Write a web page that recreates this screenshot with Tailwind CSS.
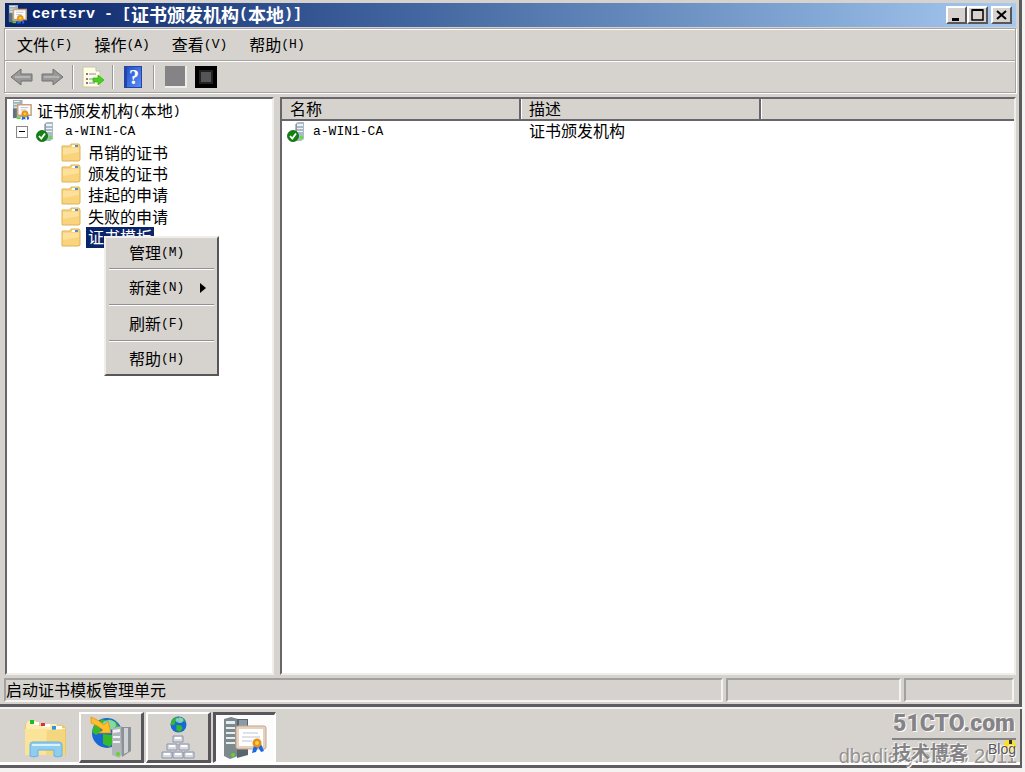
<!DOCTYPE html>
<html lang="zh-CN">
<head>
<meta charset="utf-8">
<meta name="viewport" content="width=device-width, initial-scale=1">
<title>certsrv - [证书颁发机构(本地)]</title>
<script src="https://cdn.jsdelivr.net/npm/@tailwindcss/browser@4"></script>
</head>
<body class="flex h-screen flex-col overflow-hidden bg-[#f4f3f1] pr-[3px] pb-1 font-['Liberation_Mono','Noto_Sans_CJK_SC',monospace] text-[13px] leading-5 text-black">

<svg class="hidden" aria-hidden="true">
  <symbol id="cert" viewBox="0 0 22 22">
    <path d="M1 0h10v18H1z" fill="#9fb0b8"/><path d="M2 1h6v1H2zm0 3h6v1H2zm0 3h6v1H2z" fill="#eef5f8"/><path d="M1 9h4v10H1z" fill="#64727b"/>
    <path d="M6 5h14v11H6z" fill="#fff" stroke="#c9a27c" stroke-width="1.6"/><path d="M9 8h8M9 10.500h6" stroke="#b8bcd8" stroke-width="1"/>
    <path d="M11 16l-1 5 3-1 1 1v-5zM15 16l1 5 2-1-1-4z" fill="#1769f5"/><path d="M5 18h4v2H5z" fill="#5fd32b"/>
    <circle cx="13.500" cy="14.500" r="3.600" fill="#e89410"/><circle cx="13.500" cy="14.500" r="1.500" fill="#ffc845"/>
  </symbol>
  <symbol id="server" viewBox="0 0 18 20">
    <path d="M9 1l2-1h6v17l-3 2H9z" fill="#a9bcc6"/><path d="M10 2h6v2h-6zm0 4h6v1h-6zm0 3h6v1h-6z" fill="#eaf2f6"/><path d="M9 2v16" stroke="#637580"/><path d="M13 14h3v3h-3z" fill="#5fe336"/>
    <circle cx="6" cy="14" r="5.500" fill="#128312" stroke="#0a600a" stroke-width=".8"/><path d="M3 14l2.300 2.500L9 11.500" fill="none" stroke="#fff" stroke-width="1.800"/>
  </symbol>
  <symbol id="folder" viewBox="0 0 20 19">
    <path d="M1 3h8l1-2h8l1 2v14l-1 1H1z" fill="#f9d47c" stroke="#dcb556"/><path d="M11 2h6v2h-6z" fill="#fff"/><path d="M14 2h3v2h-3z" fill="#5292c7"/><path d="M2 5h16v4L2 12z" fill="#ffe09a"/>
  </symbol>
  <symbol id="globe" viewBox="0 0 32 32">
    <circle cx="16" cy="16" r="15" fill="#1767d5"/><path d="M3 9l8-7 5 2-2 5-5 2 1 4-5 3-4-3zM18 2l7 3 4 6-6-1-3 3-5-4zM12 17l9 1 3 5-5 7-7-3z" fill="#37b82d"/><ellipse cx="18" cy="8" rx="7" ry="5" fill="#c8f5ff" opacity=".55"/>
  </symbol>
</svg>

<main class="flex min-h-0 flex-1 flex-col border-r-3 border-b-3 border-r-[#5c5c5c] border-b-[#5f5d60] bg-[#d6d3ce] pt-[3px] pr-[3px] pb-[2px] pl-1">
  <header class="ml-px flex h-6 shrink-0 items-center bg-linear-to-r from-[#0a246a] to-[#a6caf0] pr-1 pl-[3px] text-white">
    <svg class="size-5 shrink-0" aria-hidden="true"><use href="#cert"/></svg>
    <h1 class="ml-1 flex flex-1 items-center whitespace-pre text-[15px] font-bold">certsrv - [<span class="pt-1 text-lg leading-5">证书颁发机构</span>(<span class="pt-1 text-lg leading-5">本地</span>)]</h1>
    <button aria-label="最小化" class="h-[18px] w-[21px] border-2 border-t-white border-r-[#58565a] border-b-[#58565a] border-l-white bg-[#d6d3ce]"><svg class="size-full" viewBox="0 0 17 14"><path d="M4 10h7v3H4z"/></svg></button>
    <button aria-label="最大化" class="h-[18px] w-[21px] border-2 border-t-white border-r-[#58565a] border-b-[#58565a] border-l-white bg-[#d6d3ce]"><svg class="size-full" viewBox="0 0 17 14"><path d="M3 2h11v10H3z" fill="none" stroke="#000" stroke-width="1.500"/><path d="M3 1h11v2H3z"/></svg></button>
    <button aria-label="关闭" class="ml-[3px] h-[18px] w-[21px] border-2 border-t-white border-r-[#58565a] border-b-[#58565a] border-l-white bg-[#d6d3ce]"><svg class="size-full" viewBox="0 0 17 14"><path d="M4 3l9 8M13 3l-9 8" stroke="#000" stroke-width="2"/></svg></button>
  </header>

  <div class="mt-px shrink-0 border border-[#a6a4a3] shadow-[1px_1px_#fff,inset_1px_1px_#fff]">
    <nav aria-label="菜单栏" class="flex h-[31px] items-center gap-[22px] pl-3">
      <button class="flex items-center"><span class="pt-1 text-base leading-5">文件</span>(F)</button>
      <button class="flex items-center"><span class="pt-1 text-base leading-5">操作</span>(A)</button>
      <button class="flex items-center"><span class="pt-1 text-base leading-5">查看</span>(V)</button>
      <button class="flex items-center"><span class="pt-1 text-base leading-5">帮助</span>(H)</button>
    </nav>
    <div role="toolbar" aria-label="工具栏" class="flex h-[32px] items-center border-t border-[#a6a4a3] pl-[5px] shadow-[inset_0_1px_#fff]">
      <button aria-label="后退"><svg class="h-[18px] w-6" viewBox="0 0 24 18"><path d="M1 9l10-8v5h11v7H11v4z" fill="#989898" stroke="#707070"/><path d="M5 9h15" stroke="#b5b5b5" stroke-width="2"/></svg></button>
      <button aria-label="前进" class="ml-[6px]"><svg class="h-[18px] w-6" viewBox="0 0 24 18"><path d="M23 9L13 1v5H2v7h11v4z" fill="#989898" stroke="#707070"/><path d="M4 9h15" stroke="#b5b5b5" stroke-width="2"/></svg></button>
      <span class="ml-2 h-6 border-r border-l border-r-white border-l-[#999]"></span>
      <button aria-label="导出列表" class="ml-2"><svg class="size-[22px]" viewBox="0 0 22 22"><path d="M1 1h13l4 4v16H1z" fill="#fffde4" stroke="#c9c6ac"/><path d="M14 1v4h4" fill="#ddd" stroke="#bbb"/><path d="M4 8h2m-2 5h2m-2 4h2" stroke="#555" stroke-width="1.500"/><path d="M7 8h7m-7 5h5m-5 4h6" stroke="#8a8aad"/><path d="M11 12h5V9l6 5-6 5v-3h-5z" fill="#49cf20" stroke="#2fae12" stroke-width=".7"/></svg></button>
      <span class="ml-2 h-6 border-r border-l border-r-white border-l-[#999]"></span>
      <button aria-label="帮助" class="ml-[10px] flex h-[22px] w-[18px] items-center justify-center border border-l-3 border-[#2545a5] bg-linear-to-br from-[#2351cc] to-[#5d8df5] font-['Liberation_Serif',serif] text-xl font-bold text-white">?</button>
      <span class="ml-[11px] h-6 border-r border-l border-r-white border-l-[#999]"></span>
      <button aria-label="停止" class="ml-[10px] size-[22px] border-r-2 border-b-2 border-[#eeedeb] bg-[#858385]"></button>
      <button aria-label="属性" class="ml-2 size-[22px] border-4 border-black bg-[#555] shadow-[inset_0_0_0_2px_#222]"></button>
    </div>
  </div>

  <div class="mt-1 flex min-h-0 flex-1 gap-[6px]">
    <section aria-label="控制台树" class="ml-px w-[269px] shrink-0 border-2 border-t-[#68666a] border-r-[#efeeeb] border-b-[#efeeeb] border-l-[#68666a] bg-white pt-px">
      <ul>
        <li class="flex h-[21px] items-center pl-[5px]"><svg class="size-[21px]" aria-hidden="true"><use href="#cert"/></svg><span class="ml-1 flex items-center"><span class="pt-1 text-base leading-5">证书颁发机构</span>(<span class="pt-1 text-base leading-5">本地</span>)</span></li>
        <li>
          <div class="flex h-[21px] items-center pl-[9px]">
            <button aria-label="折叠" class="flex size-3 items-center justify-center border border-[#888]"><span class="h-px w-[6px] bg-black"></span></button>
            <svg class="ml-2 h-5 w-[18px]" aria-hidden="true"><use href="#server"/></svg><span class="ml-[11px]">a-WIN1-CA</span>
          </div>
          <ul class="text-base leading-5">
            <li class="flex h-[21px] items-center gap-[7px] pl-[54px]"><svg class="h-[19px] w-5" aria-hidden="true"><use href="#folder"/></svg><span class="pt-1">吊销的证书</span></li>
            <li class="flex h-[21px] items-center gap-[7px] pl-[54px]"><svg class="h-[19px] w-5" aria-hidden="true"><use href="#folder"/></svg><span class="pt-1">颁发的证书</span></li>
            <li class="flex h-[22px] items-center gap-[7px] pl-[54px]"><svg class="h-[19px] w-5" aria-hidden="true"><use href="#folder"/></svg><span class="pt-1">挂起的申请</span></li>
            <li class="flex h-[21px] items-center gap-[7px] pl-[54px]"><svg class="h-[19px] w-5" aria-hidden="true"><use href="#folder"/></svg><span class="pt-1">失败的申请</span></li>
            <li class="relative flex h-[21px] items-center gap-[5px] pl-[54px]"><svg class="h-[19px] w-5" aria-hidden="true"><use href="#folder"/></svg><span class="h-[21px] bg-[#0a246a] px-[2px] pt-[2px] text-white">证书模板</span>
              <div role="menu" class="absolute top-[9px] left-[97px] z-10 flex w-[115px] flex-col border-2 border-t-[#efeeeb] border-r-[#58565a] border-b-[#58565a] border-l-[#efeeeb] bg-[#d6d3ce] px-[3px] text-black">
                <button role="menuitem" class="flex h-[30px] items-center pl-[20px]"><span class="pt-1">管理</span><span class="text-[13px]">(M)</span></button>
                <hr class="h-[2px] border-t border-b border-t-[#929092] border-b-white">
                <button role="menuitem" class="flex h-[34px] items-center pt-[2px] pl-[20px]"><span class="pt-1">新建</span><span class="text-[13px]">(N)</span><svg class="ml-4 h-[10px] w-[6px]" viewBox="0 0 6 10"><path d="M0 0l6 5-6 5z"/></svg></button>
                <hr class="h-[2px] border-t border-b border-t-[#929092] border-b-white">
                <button role="menuitem" class="flex h-[34px] items-center pt-[2px] pl-[20px]"><span class="pt-1">刷新</span><span class="text-[13px]">(F)</span></button>
                <hr class="h-[2px] border-t border-b border-t-[#929092] border-b-white">
                <button role="menuitem" class="flex h-8 items-center pt-[2px] pl-[20px]"><span class="pt-1">帮助</span><span class="text-[13px]">(H)</span></button>
              </div>
            </li>
          </ul>
        </li>
      </ul>
    </section>
    <section aria-label="详细信息" class="min-w-0 flex-1 border-2 border-t-[#68666a] border-r-[#efeeeb] border-b-[#efeeeb] border-l-[#68666a] bg-white">
      <table class="w-full table-fixed border-separate border-spacing-0 text-left">
        <colgroup><col class="w-[239px]"><col class="w-[240px]"><col></colgroup>
        <thead class="bg-[#d6d3ce] text-base leading-4">
          <tr>
            <th class="h-[22px] border-r-2 border-b-2 border-[#68666a] p-0 pt-1 pl-2 font-normal">名称</th>
            <th class="border-r-2 border-b-2 border-[#68666a] p-0 pt-1 pl-2 font-normal shadow-[inset_1px_0_#fff]">描述</th>
            <td class="border-b-2 border-[#68666a] p-0 shadow-[inset_1px_0_#fff]"></td>
          </tr>
        </thead>
        <tbody>
          <tr><td class="h-[21px] p-0 pl-[5px]"><div class="flex items-center gap-2"><svg class="h-5 w-[18px]" aria-hidden="true"><use href="#server"/></svg>a-WIN1-CA</div></td><td class="p-0 pt-[2px] pl-2 text-base leading-[18px]">证书颁发机构</td><td></td></tr>
        </tbody>
      </table>
    </section>
  </div>

  <footer class="mt-[3px] mr-[2px] flex h-6 shrink-0 gap-[3px] text-base leading-6">
    <div class="flex-1 border-2 border-t-[#a3a1a0] border-r-[#f4f3f1] border-b-[#f4f3f1] border-l-[#a3a1a0]">启动证书模板管理单元</div>
    <div class="w-[175px] border-2 border-t-[#a3a1a0] border-r-[#f4f3f1] border-b-[#f4f3f1] border-l-[#a3a1a0]"></div>
    <div class="w-[110px] border-2 border-t-[#a3a1a0] border-r-[#f4f3f1] border-b-[#f4f3f1] border-l-[#a3a1a0]"></div>
  </footer>
</main>

<nav aria-label="任务栏" class="relative mt-[2px] flex h-[59px] shrink-0 items-start gap-[2px] border-r-2 border-b-3 border-[#5f5d60] bg-[#d6d3ce] pt-[3px] pl-3 shadow-[inset_0_-3px_#fff]">
  <button aria-label="文件资源管理器" class="flex h-[51px] w-[65px] items-center justify-center">
    <svg class="h-10 w-11" viewBox="0 0 44 40"><path d="M2 6l4-3h8l3 4h23l3 3v27H2z" fill="#e9c866"/><path d="M5 3h8l3 5h7l2-2h8l2 4h7v9H3V6z" fill="#ffeab0"/><path d="M11 4h5v3h-5zM20 6h7v3h-7zM31 8h8v4h-8z" fill="#fff"/><path d="M7 2h4v4H7z" fill="#1dbb24"/><path d="M18 5h4v3h-4z" fill="#d9342b"/><path d="M29 8h4v4h-4z" fill="#2897e0"/><path d="M2 11l20 1 20-1v26H2z" fill="#f3d67e"/><path d="M2 11h22l-1 26H2z" fill="#fbe39a"/><path d="M7 27q0-3 3-3h26q3 0 3 3v11q-5 2-8 0v-6H15v6q-4 2-8 0z" fill="#8fcdf0" stroke="#68b2dc"/><path d="M9 27h28" stroke="#d8f3ff" stroke-width="2"/></svg>
  </button>
  <button aria-label="Web 服务器" class="flex h-[51px] w-[65px] items-center justify-center border-t-2 border-r-3 border-b-3 border-l-2 border-t-white border-r-[#58565a] border-b-[#58565a] border-l-white">
    <svg class="h-11 w-[42px]" viewBox="0 0 42 44"><use href="#globe" x="1" y="2" width="32" height="32"/><path d="M1 2q8 3 13 8l4-4 3 12H9l4-3Q7 10 1 8z" fill="#ffbe2b" stroke="#df8d10" stroke-width=".7"/><path d="M22 13l10-2v29l-3 3-7-3z" fill="#b1b7ba"/><path d="M31 12h10v24l-9 6z" fill="#8b9195"/><path d="M34 13h4v24l-4 2z" fill="#d0d3d5"/><path d="M23 15l7-1v3l-7 1zm0 6h7v2h-7zm0 5h7v2h-7z" fill="#edf2f4"/><circle cx="28" cy="39" r="2" fill="#61d52b"/></svg>
  </button>
  <button aria-label="网络" class="flex h-[51px] w-[65px] items-center justify-center border-t-2 border-r-3 border-b-3 border-l-2 border-t-white border-r-[#58565a] border-b-[#58565a] border-l-white">
    <svg class="h-11 w-9" viewBox="0 0 36 44"><use href="#globe" x="10" y="1" width="17" height="17"/><g fill="#d6dae7" stroke="#8e93a2"><path d="M13 21h10v6H13zM7 29h10v6H7zM19 29h10v6H19zM2 37h10v6H2zM13 37h10v6H13zM24 37h10v6H24z"/></g><path d="M15 23h6M9 31h6m6 0h6M4 39h6m5 0h6m5 0h6" stroke="#fff" stroke-width="2"/></svg>
  </button>
  <button aria-label="certsrv" class="flex h-[51px] w-[63px] items-center justify-center border-t-3 border-r-2 border-b-2 border-l-3 border-t-[#58565a] border-r-white border-b-white border-l-[#58565a] bg-[#fcfcfc]">
    <svg class="h-[42px] w-11" viewBox="0 0 44 42"><path d="M1 2l7-2 7 2v37l-8 3-6-3z" fill="#7e898e"/><path d="M14 2h11v36l-11 3z" fill="#58656d"/><path d="M3 4h9v3H3zm0 6h9v2H3zm0 5h9v2H3zm0 5h9v2H3zm0 5h9v2H3z" fill="#e5edf0"/><path d="M16 3h8v6h-8z" fill="#889ba6"/><circle cx="10" cy="38" r="2" fill="#5bd923"/><rect x="13" y="9" width="30" height="23" rx="2" fill="#e6d0be" stroke="#c5a58c"/><path d="M16 12h24v17H16z" fill="#fff"/><path d="M20 16h15M19 20h18M19 24h10" stroke="#c1c2da"/><path d="M31 28l-2 8 4-1 2-5 3 5 3-1-3-7z" fill="#1769e5"/><circle cx="34" cy="26" r="4.500" fill="#e49116"/><circle cx="34" cy="26" r="2" fill="#ffc750"/></svg>
  </button>

  <!-- Watermarks lie over the notification area -->
  <div class="absolute top-[35px] right-[3px] whitespace-nowrap font-['Liberation_Sans',sans-serif] text-xl leading-6 text-[#96928f] [text-shadow:1px_1px_#fff]">dbadiary.51cto 2011</div>
  <svg class="absolute top-[28px] right-[2px] h-5 w-4" viewBox="0 0 16 20" aria-hidden="true"><path d="M2 15V7l3-5h5l4 5v8z" fill="#ffdf20"/><path d="M7 3h3v4H7z" fill="#333"/></svg>
  <div class="absolute top-0 right-1 w-[124px] text-[#858385] [text-shadow:1px_1px_#fff,-1px_-1px_#efefef]">
    <div class="border-b-2 border-[#858385] text-center font-[Roboto,sans-serif] text-[23px] leading-[29px] font-black text-[#858385]">51CTO.com</div>
    <div class="flex justify-between"><span class="text-[19px] leading-[30px] font-bold">技术博客</span><span class="font-['Liberation_Sans',sans-serif] text-sm leading-[18px] text-[#565458]">Blog</span></div>
  </div>
</nav>
</body>
</html>
